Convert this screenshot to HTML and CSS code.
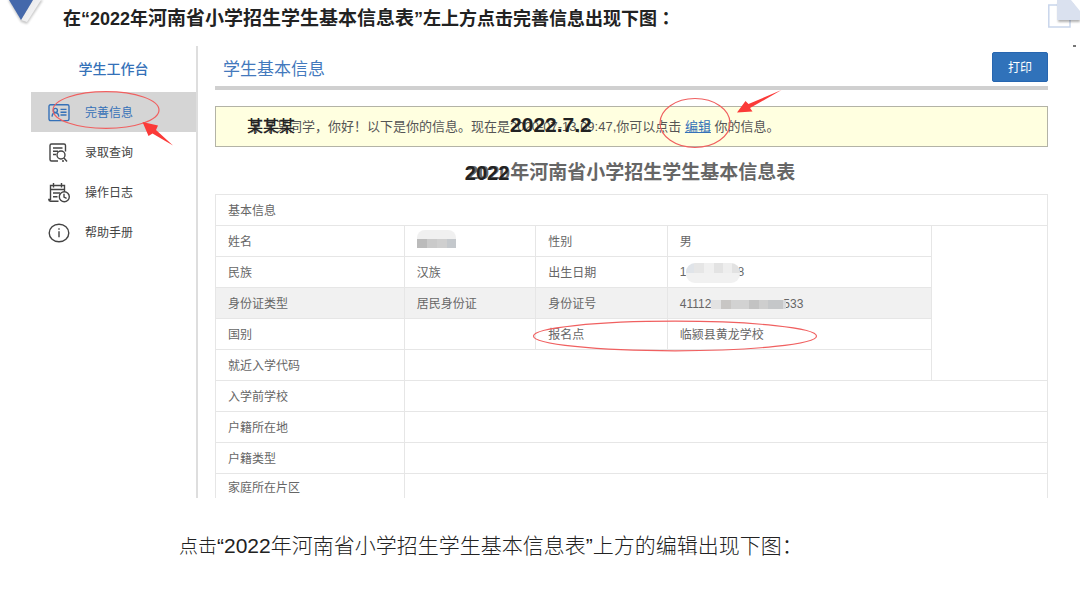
FILE: index.html
```html
<!DOCTYPE html>
<html lang="zh-CN">
<head>
<meta charset="utf-8">
<meta name="viewport" content="width=device-width, initial-scale=1">
<title>学生基本信息</title>
<link rel="stylesheet" href="styles.css">
</head>
<body>
<div class="slide">
  <svg class="corner-left" width="46" height="28" viewBox="0 0 46 28" aria-hidden="true">
    <defs>
      <linearGradient id="fold" x1="0" y1="0" x2="1" y2="0.7"><stop offset="0.3" stop-color="#e9e9eb"/><stop offset="0.75" stop-color="#f3f3f4"/><stop offset="1" stop-color="#c4c4c8"/></linearGradient>
      <filter id="soft"><feGaussianBlur stdDeviation="1"/></filter>
    </defs>
    <path d="M8 0 L21 22 L27 24 L43 0Z" fill="#000" opacity=".22" filter="url(#soft)"/>
    <path d="M33 0 L41 0 L27 22 L21 20Z" fill="url(#fold)"/>
    <path d="M9 0 H33 L21 20Z" fill="#4468ab"/>
  </svg>
  <svg class="corner-right" width="34" height="50" viewBox="0 0 34 50" aria-hidden="true">
    <path d="M2.8 5 H24 V27 H2.8Z" fill="none" stroke="#c9d6ec" stroke-width="1.5"/>
    <path d="M12 3 H34 V22 H12Z" fill="#000" opacity=".3" filter="url(#soft)"/>
    <path d="M25 0 H34 V13Z" fill="#fff"/>
    <path d="M11 0 H25 L34 11 V20 H11Z" fill="#dae1ef"/>
    <path d="M27 46 H30" stroke="#777" stroke-width="2"/>
  </svg>

  <h1 class="lead">在“2022年<span class="form-name">河南省小学招生学生基本信息表</span>”左上方点击完善信息出现下图<span class="colon" lang="zh-TW">：</span></h1>

  <div class="app">
    <aside class="sidebar">
      <h2 class="sidebar-title">学生工作台</h2>
      <nav class="menu">
        <a class="menu-item active" href="#profile">
          <svg class="icon" viewBox="0 0 22 22" aria-hidden="true"><rect x="1" y="2.800" width="20" height="15.800" rx="1.500"/><circle cx="7.400" cy="8.400" r="2"/><path d="M4 14.600c.3-2.500 1.400-3.800 3.400-3.800s3.100 1.300 3.400 3.800M12.500 7.400h6M12.500 10.200h6M12.500 13h6"/></svg>
          完善信息
        </a>
        <a class="menu-item" href="#query">
          <svg class="icon" viewBox="0 0 22 22" aria-hidden="true"><path d="M10 19H3.500A1.500 1.500 0 0 1 2 17.500V3.500A1.500 1.500 0 0 1 3.500 2H16a1.500 1.500 0 0 1 1.500 1.500v6M5 6h9.500M5 9.200h5M5 12.500h3"/><circle cx="13" cy="13" r="4"/><path d="M16 16L19 19.500M14 19h2"/></svg>
          录取查询
        </a>
        <a class="menu-item" href="#log">
          <svg class="icon" viewBox="0 0 22 22" aria-hidden="true"><path d="M10.500 19.300H2.500A1.800 1.800 0 0 1 .8 17.500H2.500V3.500H16.500V10M5.500 1v4.500M13.500 1v4.500M2.500 7.500h14M5 11h7M5 14.800h4.500"/><circle cx="16.300" cy="14.800" r="5"/><path d="M16 11.800v3.300l2.600 1.200"/></svg>
          操作日志
        </a>
        <a class="menu-item" href="#help">
          <svg class="icon" viewBox="0 0 22 22" aria-hidden="true"><ellipse cx="11" cy="11" rx="9.800" ry="8.800"/><path d="M11 9.200v6M11 6.200v1.600"/></svg>
          帮助手册
        </a>
      </nav>
      <svg class="mark mark-menu" width="124" height="60" viewBox="0 0 124 60" aria-hidden="true">
        <ellipse class="ring" cx="55" cy="20" rx="53" ry="18.400"/>
        <path class="arrow" d="M91.500 32 L107 35.500 L105 40 L122 55.500 L101.500 43.500 L97.500 46Z"/>
      </svg>
    </aside>

    <main class="content">
      <header class="content-head">
        <h2 class="content-title">学生基本信息</h2>
        <button class="print" type="button">打印</button>
      </header>

      <div class="notice">
        <p class="notice-text"><span class="covered">某某某<span class="cover cover-name">某某某</span></span>同学，你好！以下是你的信息。现在是<span class="covered">2020-07-13,09:47<span class="cover cover-date">2022.7.2</span></span>,你可以点击 <span class="covered"><a class="edit" href="#edit">编辑</a><svg class="mark mark-edit" width="124" height="62" viewBox="0 0 124 62" aria-hidden="true"><ellipse class="ring" cx="36" cy="35" rx="35" ry="24.500"/><path class="arrow" d="M78 24.500 L86.500 13 L89.500 16 L122.500 2 L91 20 L93.500 23.500Z"/></svg></span> 你的信息。</p>
      </div>

      <h3 class="form-title"><span class="covered">2020<span class="cover cover-year">2022</span></span>年河南省小学招生学生基本信息表</h3>

      <div class="table-view">
        <table class="info">
          <colgroup><col class="c-label"><col class="c-value"><col class="c-label2"><col class="c-value2"><col class="c-photo"></colgroup>
          <tbody>
            <tr><th colspan="5" scope="colgroup">基本信息</th></tr>
            <tr><td>姓名</td><td><span class="mosaic mosaic-name"></span></td><td>性别</td><td>男</td><td rowspan="5"></td></tr>
            <tr><td>民族</td><td>汉族</td><td>出生日期</td><td>1<span class="mosaic mosaic-birth"></span>8</td></tr>
            <tr class="shaded"><td>身份证类型</td><td>居民身份证</td><td>身份证号</td><td>41112<span class="mosaic mosaic-id"></span>533</td></tr>
            <tr><td>国别</td><td></td><td class="marked">报名点<svg class="mark mark-school" width="286" height="32" viewBox="0 0 286 32" aria-hidden="true"><ellipse class="ring" cx="143" cy="16" rx="141.500" ry="14.800"/></svg></td><td>临颍县黄龙学校</td></tr>
            <tr><td>就近入学代码</td><td colspan="3"></td></tr>
            <tr><td>入学前学校</td><td colspan="4"></td></tr>
            <tr><td>户籍所在地</td><td colspan="4"></td></tr>
            <tr><td>户籍类型</td><td colspan="4"></td></tr>
            <tr class="last"><td>家庭所在片区</td><td colspan="4"></td></tr>
          </tbody>
        </table>
      </div>
    </main>
  </div>

  <p class="caption"><span class="caption-start">点击</span>“2022年河南省小学招生学生基本信息表”上方的编辑出现下图：</p>
</div>
</body>
</html>
```

FILE: styles.css
```css
* { box-sizing: border-box; }

body {
  margin: 0;
  background: #fff;
  color: #666;
  font: 12px/20px "Liberation Sans", "Noto Sans CJK SC", sans-serif;
}

h1, h2, h3, p { margin: 0; }
a { color: inherit; text-decoration: none; }

.slide { position: relative; padding: 0 32px 0 31px; }

.corner-left { position: absolute; left: 0; top: 0; }
.corner-right { position: absolute; right: 0; top: 0; }

.lead {
  padding: 5px 0 13px 32px;
  color: #222;
  font-size: 18px;
  line-height: 28px;
  font-weight: 700;
}
.form-name { font-size: 19px; line-height: 20px; }
.colon { font-family: "Noto Sans CJK TC", sans-serif; line-height: 20px; }

.app { display: flex; }

.sidebar {
  position: relative;
  flex: 0 0 167px;
  border-right: 2px solid #dedede;
}
.sidebar-title {
  padding: 11px 0;
  color: #3571b8;
  font-size: 14px;
  line-height: 24px;
  font-weight: 500;
  text-align: center;
}
.menu-item {
  display: flex;
  align-items: center;
  gap: 15px;
  height: 40px;
  padding: 1px 0 0 17px;
  color: #444;
}
.menu-item.active { background: #d5d5d5; color: #3571b8; }
.icon {
  width: 22px;
  height: 22px;
  fill: none;
  stroke: currentColor;
  stroke-width: 1.4;
}

.mark { position: absolute; pointer-events: none; }
.ring { fill: none; stroke: #f06060; stroke-width: 1.2; }
.arrow { fill: #fb3a38; }
.mark-menu { left: 20px; top: 44px; }

.content { flex: 1; min-width: 0; padding-left: 17px; }

.content-head {
  display: flex;
  align-items: center;
  justify-content: space-between;
  padding: 6px 0 4px 8px;
  border-bottom: 4px solid #d0d0d0;
}
.content-title {
  padding-top: 6px;
  color: #4379bd;
  font-size: 17px;
  line-height: 24px;
  font-weight: 400;
}
.print {
  width: 56px;
  height: 30px;
  padding: 1px 0 0;
  border: 1px solid #2766b0;
  border-radius: 2px;
  background: #3072ba;
  color: #fff;
  font: inherit;
}

.notice {
  margin-top: 16px;
  padding: 9px 0 8px 34px;
  border: 1px solid #b3b3a6;
  background: #ffffe0;
  color: #555;
}
.notice-text { font-size: 13px; line-height: 22px; white-space: nowrap; }
.edit { color: #3571b8; text-decoration: underline; }

.covered { position: relative; display: inline-block; }
.cover { position: absolute; white-space: nowrap; color: #222; }
.cover-name { left: -3px; top: 0; font-size: 16px; font-weight: 500; }
.cover-date { left: 0; top: -2px; font-size: 21px; font-weight: 700; }
.cover-year { left: -3px; top: 0; font-size: 20px; }
.mark-edit { left: -26px; top: -28px; }

.form-title {
  padding: 12px 0 7px;
  color: #666;
  font-size: 19px;
  line-height: 28px;
  font-weight: 700;
  text-align: center;
}

.info {
  width: 100%;
  table-layout: fixed;
  border-collapse: collapse;
}
.c-label { width: 22.7%; }
.c-value { width: 15.8%; }
.c-label2 { width: 15.8%; }
.c-value2 { width: 31.7%; }
.info th, .info td {
  height: 31px;
  padding: 1px 12px 0;
  border: 1px solid #e6e6e6;
  font-weight: 400;
  text-align: left;
  white-space: nowrap;
}
.shaded td { background: #f1f1f1; }
.info .last td { height: 24px; padding-top: 4px; border-bottom: 0; }
.info .marked { position: relative; }
.mark-school { left: -4px; top: 1px; }

.mosaic { display: inline-block; vertical-align: middle; }
.mosaic-name {
  width: 39px;
  height: 18px;
  margin-bottom: 6px;
  border-radius: 8px 8px 0 0;
  background:
    linear-gradient(#f0f0f0, #f0f0f0) top / 100% 9px no-repeat,
    linear-gradient(90deg, #bbb 10px, #cacaca 10px 20px, #cfcfcf 20px 30px, #c4c8cc 30px);
}
.mosaic-birth {
  position: relative;
  width: 54px;
  height: 20px;
  margin-right: -3px;
  border-radius: 9px;
  background:
    linear-gradient(90deg, #e0e4e9 8px, #e6e6e6 8px 18px, #f0f0f0 18px 28px, #e3e3e3 28px 37px, #eee 37px 46px, #e2e2e2 46px) top / 100% 10px no-repeat,
    #f1f1f1;
}
.mosaic-id {
  position: relative;
  width: 75px;
  height: 9px;
  margin-right: -3px;
  background: linear-gradient(90deg, #e2e2e2 10px, #c8c6c4 10px 20px, #d2d2d2 20px 38px, #c3c3c3 38px 48px, #cecece 48px 57px, #c5c7c9 57px 72px, #d8dadc 72px);
}

.caption {
  padding: 34px 0 36px 148px;
  color: #222;
  font-size: 21px;
  line-height: 28px;
  font-weight: 300;
}
.caption-start { font-size: 19px; }
```
